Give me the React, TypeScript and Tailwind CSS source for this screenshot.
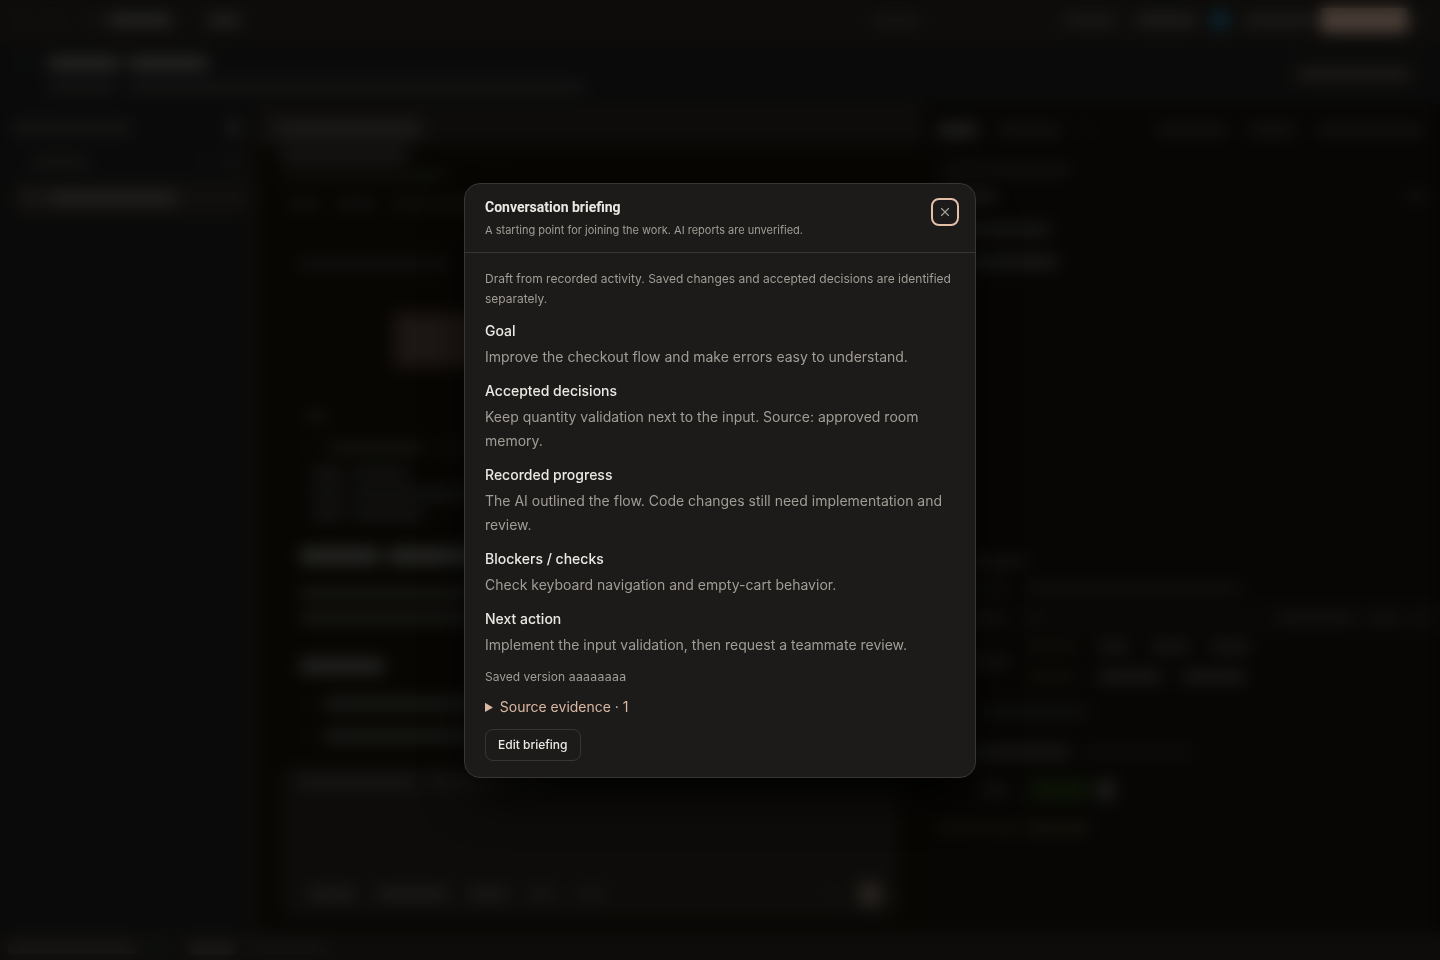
import React, { useState } from "react";
import { X } from "lucide-react";

interface BarProps {
  className?: string;
}

interface RowProps {
  className?: string;
  children: React.ReactNode;
}

interface BriefingSection {
  title: string;
  body: string;
}

const sections: BriefingSection[] = [
  {
    title: "Goal",
    body: "Improve the checkout flow and make errors easy to understand.",
  },
  {
    title: "Accepted decisions",
    body: "Keep quantity validation next to the input. Source: approved room memory.",
  },
  {
    title: "Recorded progress",
    body: "The AI outlined the flow. Code changes still need implementation and review.",
  },
  {
    title: "Blockers / checks",
    body: "Check keyboard navigation and empty-cart behavior.",
  },
  {
    title: "Next action",
    body: "Implement the input validation, then request a teammate review.",
  },
];

// Placeholder line of text
const Bar: React.FC<BarProps> = ({ className = "" }) => (
  <span className={`block shrink-0 rounded-sm ${className}`} />
);

const Row: React.FC<RowProps> = ({ className = "", children }) => (
  <div className={`flex shrink-0 items-center ${className}`}>{children}</div>
);

const TopBar = () => (
  <header className="flex h-11 shrink-0 items-center bg-[#0d0c0a] pr-4 pb-1 pl-4">
    <Bar className="h-3 w-3 bg-[#121210]" />
    <Bar className="ml-5 h-3 w-3 bg-[#121210]" />
    <Bar className="ml-7 h-3 w-3 bg-[#141412]" />
    <Bar className="ml-2 h-3 w-16 bg-[#262624]" />
    <Bar className="ml-9 h-3 w-8 bg-[#222220]" />
    <div className="ml-auto flex items-center">
      <Bar className="mr-36 h-2 w-12 bg-[#181816]" />
      <Bar className="mr-5 h-3 w-13 bg-[#1a1918]" />
      <Bar className="mr-4 h-3 w-15 bg-[#1f1e1c]" />
      <Bar className="mr-4 h-4 w-4 rounded-full bg-[#0a2a38]" />
      <Bar className="mr-2 h-3 w-17 bg-[#1c1b19]" />
      <Bar className="h-6 w-22 rounded-md bg-[#4c3f38]" />
      <Bar className="ml-3 h-2 w-1 bg-[#1c1b19]" />
    </div>
  </header>
);

const RoomHeader = () => (
  <div className="flex h-15 shrink-0 items-center bg-[#0a0a0a] pr-4 pl-5">
    <div className="flex flex-col gap-3.5">
      <Row>
        <Bar className="mr-5 h-2 w-2 rounded-full bg-[#0a1610]" />
        <Bar className="mr-2 h-3 w-18 bg-[#2a2a28]" />
        <Bar className="h-3 w-20 bg-[#2a2a28]" />
      </Row>
      <Row className="gap-3 pl-7">
        <Bar className="h-2 w-17 bg-[#191918]" />
        <Bar className="h-2 w-114 bg-[#191918]" />
      </Row>
    </div>
    <div className="ml-auto flex h-8 w-35 items-center justify-center rounded-lg bg-[#0c0b0a]">
      <Bar className="h-3 w-28 bg-[#1c1b1a]" />
    </div>
  </div>
);

const Sidebar = () => (
  <aside className="flex w-65 shrink-0 flex-col border-r-8 border-[#0d0b08] bg-[#0a0a0a] pt-2">
    <Row className="h-8 justify-between pr-3 pl-3">
      <Bar className="h-3 w-30 bg-[#161614]" />
      <Bar className="h-3 w-3 bg-[#222220]" />
    </Row>
    <Row className="mt-0.5 h-8 pr-4 pl-8">
      <Bar className="h-2 w-14 bg-[#191917]" />
      <Bar className="ml-auto h-2 w-2 bg-[#161614]" />
      <Bar className="ml-4 h-3 w-2 bg-[#181816]" />
    </Row>
    <Row className="mt-1 mr-1 ml-3 h-8 rounded-md bg-[#100f0d] pl-3">
      <Bar className="h-3 w-4 bg-[#1c1b19]" />
      <Bar className="ml-2 h-3 w-32 bg-[#232220]" />
    </Row>
  </aside>
);

const ChatPanel = () => (
  <main className="flex min-w-0 flex-1 flex-col overflow-hidden bg-[#070603] pb-3.5">
    <Row className="h-10 items-end bg-[#0d0c0a] px-1">
      <div className="flex h-7 w-40 items-center rounded-md bg-[#131210] pl-4">
        <Bar className="h-3 w-34 bg-[#1c1b1a]" />
      </div>
    </Row>
    <Row className="h-6 pl-5">
      <Bar className="h-3 w-32 bg-[#191817]" />
    </Row>
    <Row className="h-4 pl-5">
      <Bar className="h-2 w-42 bg-[#10100e]" />
    </Row>
    <Row className="h-10 gap-4 pl-7">
      <Bar className="h-2 w-8 bg-[#151412]" />
      <Bar className="h-2 w-10 bg-[#151412]" />
      <Bar className="h-2 w-24 bg-[#12110f]" />
    </Row>
    <Row className="mt-2 h-16 pl-9">
      <Bar className="h-2 w-38 bg-[#131312]" />
    </Row>
    <div className="mt-4 ml-33 flex h-14 shrink-0 flex-col justify-center gap-3 rounded-lg bg-[#1a1311] px-3">
      <Bar className="h-2 w-60 bg-[#1f1b19]" />
      <Bar className="h-2 w-52 bg-[#1f1b19]" />
    </div>
    <Row className="mt-9 h-6 pl-11">
      <Bar className="h-2 w-6 bg-[#151513]" />
    </Row>
    <Row className="mt-2 h-6 gap-3 pl-12">
      <Bar className="h-2 w-2 bg-[#111110]" />
      <Bar className="h-2 w-24 bg-[#181816]" />
      <Bar className="h-2 w-12 bg-[#0f0f0e]" />
    </Row>
    <div className="mt-0.5 flex h-16 shrink-0 flex-col justify-center gap-2 pl-13">
      <Row className="gap-2">
        <Bar className="h-3 w-8 bg-[#151514]" />
        <Bar className="h-3 w-14 bg-[#141413]" />
      </Row>
      <Row className="gap-2">
        <Bar className="h-3 w-8 bg-[#151514]" />
        <Bar className="h-3 w-32 bg-[#141413]" />
      </Row>
      <Row className="gap-2">
        <Bar className="h-3 w-8 bg-[#151514]" />
        <Bar className="h-3 w-18 bg-[#141413]" />
      </Row>
    </div>
    <Row className="mt-2.5 h-10 gap-2 pl-10">
      <Bar className="h-4 w-20 bg-[#272725]" />
      <Bar className="h-4 w-32 bg-[#272725]" />
    </Row>
    <div className="mt-1.5 flex h-12 shrink-0 flex-col justify-center gap-4 pl-10">
      <Bar className="h-2 w-64 bg-[#1f1f1d]" />
      <Bar className="h-2 w-64 bg-[#1f1f1d]" />
    </div>
    <Row className="mt-4 h-10 pl-10">
      <Bar className="h-4 w-21 bg-[#222220]" />
    </Row>
    <Row className="mt-0.5 h-8 gap-3 pl-12">
      <Bar className="h-2 w-1 bg-[#161614]" />
      <Bar className="h-3 w-48 bg-[#1a1a18]" />
    </Row>
    <Row className="h-8 gap-3 pl-12">
      <Bar className="h-2 w-1 bg-[#161614]" />
      <Bar className="h-3 w-48 bg-[#1a1a18]" />
    </Row>
    <div className="mr-6 ml-5 mt-3.5 flex min-h-0 flex-1 flex-col rounded-xl bg-[#0d0c0a] px-4 py-3">
      <Row className="gap-3">
        <Bar className="h-2 w-30 bg-[#1c1b19]" />
        <Bar className="h-2 w-30 bg-[#181715]" />
      </Row>
      <Row className="mt-auto h-6 gap-5 pl-3">
        <Bar className="h-3 w-12 bg-[#1c1b19]" />
        <Bar className="h-3 w-18 bg-[#1c1b19]" />
        <Bar className="h-3 w-10 bg-[#1b1a18]" />
        <Bar className="h-3 w-7 bg-[#171614]" />
        <Bar className="h-3 w-7 bg-[#161513]" />
        <Bar className="ml-auto h-2 w-2 bg-[#171614]" />
        <Bar className="h-6 w-6 rounded-full bg-[#27221e]" />
      </Row>
    </div>
  </main>
);

const TerminalPanel = () => (
  <section className="flex flex-1 flex-col pt-1">
    <Row className="h-6 pl-4">
      <Bar className="h-2 w-22 bg-[#181716]" />
    </Row>
    <Row className="h-7 gap-4 pl-4">
      <Bar className="h-2 w-18 bg-[#10100e]" />
      <Bar className="h-2 w-54 bg-[#131211]" />
    </Row>
    <Row className="h-8 gap-3 bg-[#090806] pr-3 pl-4">
      <Bar className="h-2 w-16 bg-[#171614]" />
      <Bar className="ml-4 h-3 w-2 bg-[#141311]" />
      <Bar className="ml-auto h-2 w-20 bg-[#151412]" />
      <Bar className="h-2 w-8 bg-[#141311]" />
      <Bar className="h-2 w-4 bg-[#131210]" />
    </Row>
    <div className="flex h-14 shrink-0 items-center pl-6">
      <Bar className="mr-4 h-3 w-16 bg-[#141312]" />
      <div className="flex flex-col gap-4.5">
        <Row className="gap-5">
          <Bar className="h-2 w-13 bg-[#15100a]" />
          <Bar className="h-3 w-8 bg-[#171614]" />
          <Bar className="h-3 w-10 bg-[#171614]" />
          <Bar className="h-3 w-10 bg-[#171614]" />
        </Row>
        <Row className="gap-5">
          <Bar className="h-2 w-13 bg-[#15100a]" />
          <Bar className="h-3 w-16 bg-[#1a1917]" />
          <Bar className="h-3 w-16 bg-[#1a1917]" />
        </Row>
      </div>
    </div>
    <Row className="h-11 pl-14">
      <Bar className="h-3 w-28 bg-[#0f0f0f]" />
    </Row>
    <Row className="h-9 gap-3 pl-4">
      <Bar className="h-3 w-33 bg-[#171716]" />
      <Bar className="h-2 w-28 bg-[#0f0f0e]" />
    </Row>
    <Row className="h-10 pl-14">
      <Bar className="h-3 w-8 bg-[#121212]" />
      <Bar className="ml-5 h-4 w-15 bg-[#0d1606]" />
      <Bar className="ml-2 h-5 w-4 bg-[#1f1f1f]" />
    </Row>
    <Row className="h-9 gap-2 pl-4">
      <Bar className="h-2 w-20 bg-[#15130c]" />
      <Bar className="h-2 w-16 bg-[#1a170f]" />
    </Row>
  </section>
);

const FilesPanel = () => (
  <section className="flex w-[36%] shrink-0 flex-col bg-[#070604]">
    <Row className="mt-2 h-9 gap-5 pr-4 pl-4">
      <Bar className="h-3 w-10 bg-[#222220]" />
      <Bar className="h-2 w-16 bg-[#171614]" />
      <Bar className="h-2 w-2 bg-[#141311]" />
      <Bar className="ml-auto h-2 w-18 bg-[#171614]" />
      <Bar className="h-2 w-12 bg-[#191816]" />
      <Bar className="h-2 w-27 bg-[#171614]" />
    </Row>
    <Row className="mt-1 h-9 pl-5">
      <Bar className="h-2 w-32 bg-[#151412]" />
    </Row>
    <Row className="h-4 justify-between pr-3 pl-4">
      <Bar className="h-3 w-15 bg-[#181715]" />
      <Bar className="h-2 w-6 bg-[#131210]" />
    </Row>
    <Row className="mt-2.5 h-8 pl-4">
      <Bar className="h-3 w-28 bg-[#181816]" />
    </Row>
    <Row className="h-8 pl-4">
      <Bar className="h-3 w-30 bg-[#1a1a18]" />
    </Row>
    <div className="h-67 shrink-0" />
    <TerminalPanel />
  </section>
);

const StatusBar = () => (
  <footer className="flex h-7 shrink-0 items-center gap-3 bg-[#0d0c0a] pt-1 pl-2">
    <Bar className="h-3 w-32 bg-[#191816]" />
    <Bar className="h-2 w-4 rounded-full bg-[#0c1510]" />
    <Bar className="ml-3 h-3 w-12 bg-[#1c1b19]" />
    <Bar className="h-3 w-20 bg-[#131210]" />
  </footer>
);

const BriefingModal: React.FC<{ onClose: () => void }> = ({ onClose }) => (
  <div className="fixed inset-0 z-50 flex items-center justify-center backdrop-blur-sm">
    <div
      role="dialog"
      aria-modal="true"
      aria-labelledby="briefing-title"
      className="w-full max-w-lg rounded-2xl border border-[#393632] bg-[#1c1b19] text-[#a19d96] shadow-2xl shadow-black"
    >
      <div className="flex items-start justify-between border-b border-[#393632] py-3.5 pr-4 pl-5">
        <div>
          <h2
            id="briefing-title"
            className="font-['Roboto',sans-serif] text-sm leading-[18px] font-bold text-[#ece9e4]"
          >
            Conversation briefing
          </h2>
          <p className="mt-1.5 text-[11px] leading-4">
            A starting point for joining the work. AI reports are unverified.
          </p>
        </div>
        <button
          type="button"
          aria-label="Close"
          onClick={onClose}
          className="flex h-7 w-7 items-center justify-center rounded-lg border-2 border-[#e2bfa9]"
        >
          <X size={14} strokeWidth={2} />
        </button>
      </div>
      <div className="flex flex-col items-start gap-3 px-5 py-4">
        <p className="text-xs leading-5">
          Draft from recorded activity. Saved changes and accepted decisions are
          identified separately.
        </p>
        {sections.map((section) => (
          <section key={section.title}>
            <h3 className="text-sm leading-5 font-medium text-[#ece9e4]">
              {section.title}
            </h3>
            <p className="mt-1 text-sm leading-6">{section.body}</p>
          </section>
        ))}
        <p className="text-xs leading-4">
          Saved version{" "}
          <span className="font-['DejaVu_Sans_Mono',monospace]">aaaaaaaa</span>
        </p>
        <details className="text-sm leading-5 text-[#d9b8a4]">
          <summary className="cursor-pointer">Source evidence · 1</summary>
        </details>
        <button
          type="button"
          className="h-8 rounded-lg border border-[#393632] px-3 text-xs font-medium text-[#ece9e4]"
        >
          Edit briefing
        </button>
      </div>
    </div>
  </div>
);

const App = () => {
  const [isOpen, setIsOpen] = useState(true);

  return (
    <div className="flex h-screen flex-col overflow-hidden bg-[#070604] font-['Inter',sans-serif]">
      <TopBar />
      <RoomHeader />
      <div className="flex min-h-0 flex-1">
        <Sidebar />
        <ChatPanel />
        <FilesPanel />
      </div>
      <StatusBar />
      {isOpen && <BriefingModal onClose={() => setIsOpen(false)} />}
    </div>
  );
};

export default App;
